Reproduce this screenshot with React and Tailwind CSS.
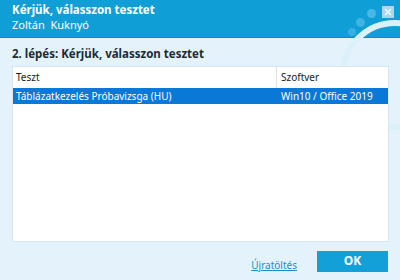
export default function App() {
  return (
    <div className="w-[400px] h-[280px] bg-[#e4f3fb] flex flex-col relative overflow-hidden" style={{ fontFamily: '"Noto Sans", "Open Sans", sans-serif' }}>
      {/* Header */}
      <div className="h-[38px] bg-[#0f9ed6] border-b border-[#0a8cc2] px-3 pt-[3px] relative shrink-0">
        <div className="text-white text-[11.5px] font-bold leading-[14px]">Kérjük, válasszon tesztet</div>
        <div className="text-white text-[11px] leading-[14px] mt-[1px]">Zoltán&nbsp; Kuknyó</div>
        <span className="absolute left-[348px] top-[28px] w-[8px] h-[8px] rounded-full bg-[#35b0e0]" />
        <span className="absolute left-[356px] top-[18px] w-[9px] h-[9px] rounded-full bg-[#3fb4e2]" />
        <span className="absolute left-[367px] top-[9px] w-[9px] h-[9px] rounded-full bg-[#4ab8e4]" />
        <button className="absolute left-[382px] top-[6px] w-[12px] h-[12px] bg-[#a9d7ec] flex items-center justify-center">
          <svg width="8" height="8" viewBox="0 0 8 8">
            <path d="M1 1 L7 7 M7 1 L1 7" stroke="#eef8fd" strokeWidth="1.6" />
          </svg>
        </button>
      </div>

      {/* faint decoration arc */}
      <div className="absolute left-[340px] top-[20px] w-[110px] h-[110px] rounded-full border-[6px] border-[#dcf0f9] pointer-events-none" />

      {/* Body */}
      <div className="flex-1 flex flex-col px-3 relative">
        <div className="text-[#1d2a33] text-[11.5px] font-bold leading-[14px] mt-[9px]">2. lépés: Kérjük, válasszon tesztet</div>
        <div className="mt-[5px] h-[176px] bg-white border border-[#d6e6ee] mr-[-1px]">
          <div className="flex h-[21px] items-center text-[10px] text-[#222]">
            <div className="w-[264px] pl-[3px] border-r border-[#e2e2e2] h-full flex items-center">Teszt</div>
            <div className="pl-[4px]">Szoftver</div>
          </div>
          <div className="flex h-[16px] items-center text-[10px] text-white bg-[#0a78d6]">
            <div className="w-[265px] pl-[3px]">Táblázatkezelés Próbavizsga (HU)</div>
            <div className="pl-[3px]">Win10 / Office 2019</div>
          </div>
        </div>
        <div className="flex items-center justify-end mt-[7px]">
          <a href="#" className="text-[#1a8fc6] text-[10px] underline mr-[20px] mt-[9px]">Újratöltés</a>
          <button className="w-[71px] h-[21px] bg-[#139fd7] text-white text-[12px] font-bold">OK</button>
        </div>
      </div>
    </div>
  );
}
